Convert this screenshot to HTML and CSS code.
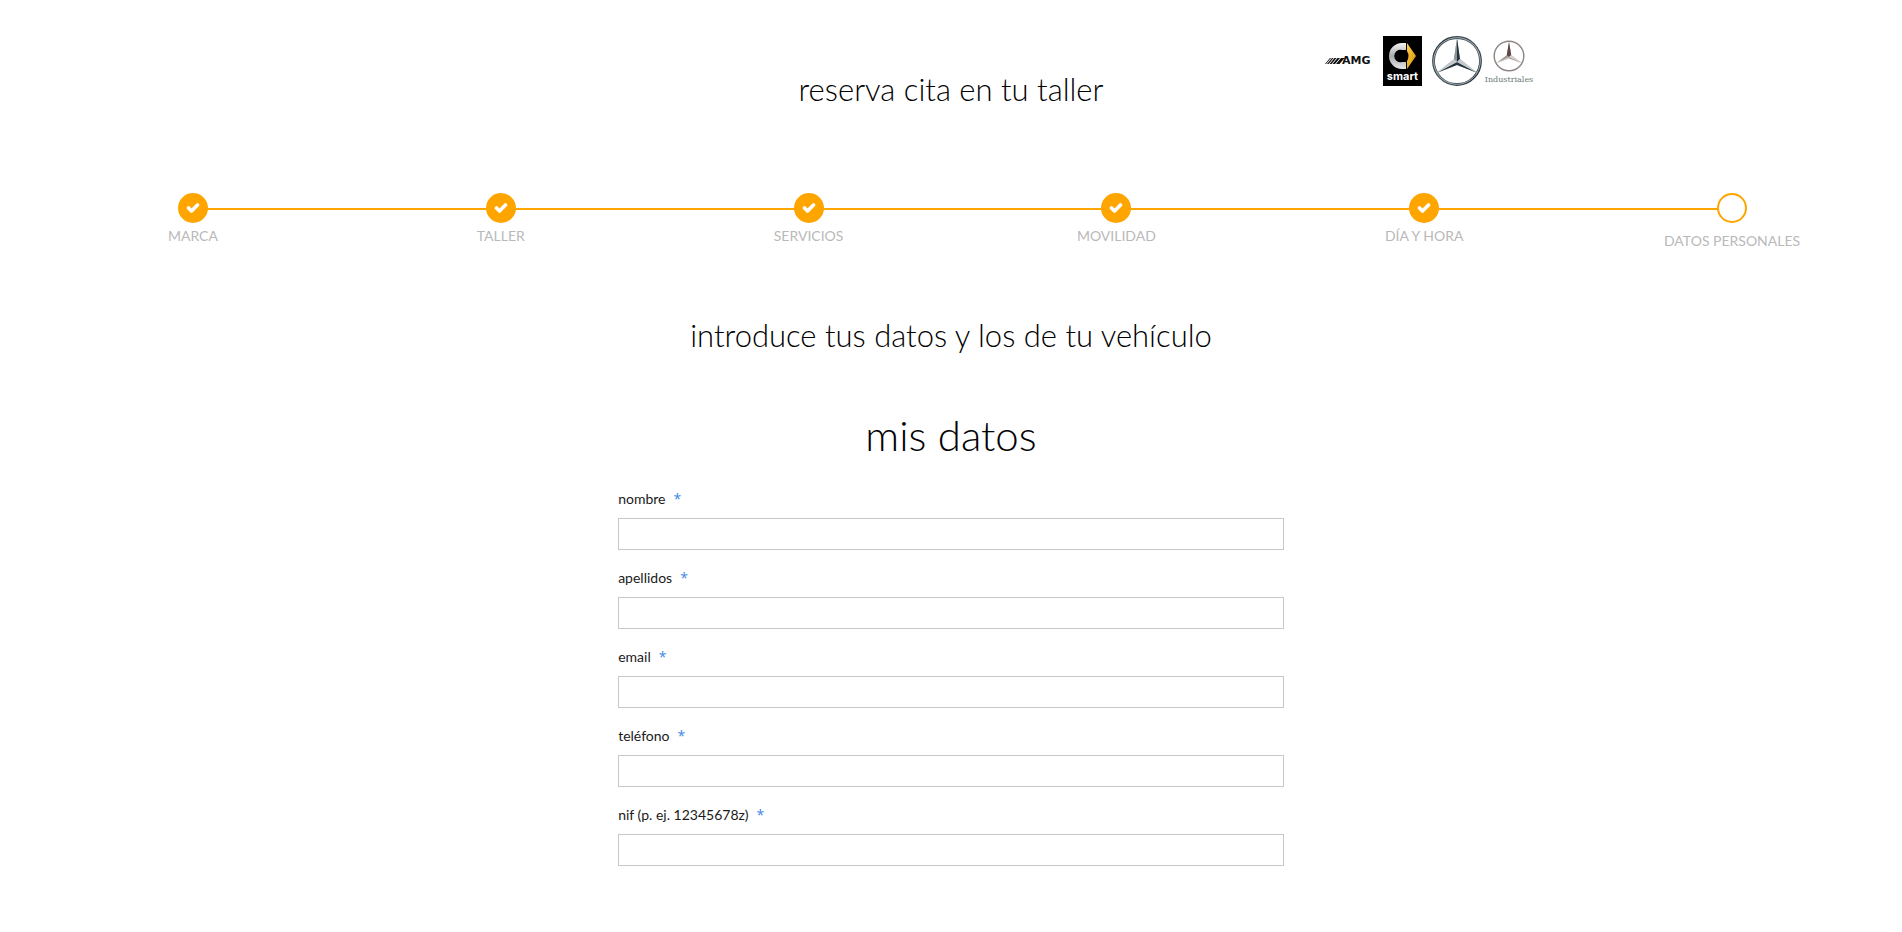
FILE: index.html
```html
<!DOCTYPE html>
<html lang="es">
<head>
<meta charset="utf-8">
<meta name="viewport" content="width=device-width, initial-scale=1">
<title>Reserva cita en tu taller</title>
<link rel="stylesheet" href="styles.css">
</head>
<body>
<svg class="defs" width="0" height="0" aria-hidden="true">
  <defs>
    <linearGradient id="chrome" x1="0" y1="0" x2="1" y2="1">
      <stop offset="0" stop-color="#1f2c33"/><stop offset=".5" stop-color="#46545b"/><stop offset="1" stop-color="#17242b"/>
    </linearGradient>
    <linearGradient id="silver" x1="0" y1="0" x2="0" y2="1">
      <stop offset="0" stop-color="#f4f4f4"/><stop offset=".5" stop-color="#a9abad"/><stop offset="1" stop-color="#e6e6e6"/>
    </linearGradient>
    <linearGradient id="gold" x1="0" y1="0" x2="1" y2="1">
      <stop offset="0" stop-color="#ffd24a"/><stop offset="1" stop-color="#d68f00"/>
    </linearGradient>
    <symbol id="check" viewBox="0 0 14 11">
      <path d="M2.5 5 L5.5 8 L11.5 2" fill="none" stroke="#fff" stroke-width="3.6" stroke-linejoin="round" stroke-linecap="round"/>
    </symbol>
  </defs>
</svg>

<header class="header">
  <h1 class="title header-title">reserva cita en tu taller</h1>
  <div class="logos">
    <svg class="logo" viewBox="0 0 50 50" role="img" aria-label="AMG">
      <g fill="#111"><path d="M0 28L5 22H6L1 28zM2 28L7 22H8.500L3.500 28zM4.500 28L9.500 22H11.500L6.500 28zM7.500 28L12.500 22H15L10 28zM11 28L16 22H19.500L14.500 28z"/></g>
      <text class="logo-amg" x="17" y="28">AMG</text>
    </svg>
    <svg class="logo" viewBox="0 0 50 50" role="img" aria-label="smart">
      <rect x="5" width="39" height="50" fill="#000"/>
      <path d="M28 7H24A13 13 0 1 0 24 33H28V26H24A6.200 6.200 0 1 1 24 14H28z" fill="url(#silver)"/>
      <path d="M29 7V15Q32 20 29 25V33L38 20z" fill="url(#gold)"/>
      <text class="logo-smart" x="24.500" y="44" text-anchor="middle">smart</text>
    </svg>
    <svg class="logo" viewBox="0 0 50 50" role="img" aria-label="Mercedes-Benz">
      <circle cx="26" cy="25" r="23.500" fill="none" stroke="url(#chrome)" stroke-width="2.800"/>
      <circle cx="26" cy="25" r="23.300" fill="none" stroke="#c9d2d5" stroke-width=".8"/>
      <path d="M26 2L29 23L46.500 37L26 29L5.500 37L23 23z" fill="#a5afb3"/>
      <path d="M26 2L29 23L26 26zM46.500 37L26 29V26zM5.500 37L26 29V26z" fill="#26343b"/>
      <path d="M26 2L23 23L26 26z" fill="#87949a"/>
      <path d="M29 23L46.500 37L26 26zM23 23L5.500 37L26 26z" fill="#c3cace"/>
    </svg>
    <svg class="logo" viewBox="0 0 50 50" role="img" aria-label="Mercedes-Benz Industriales">
      <circle cx="25" cy="20" r="14.800" fill="none" stroke="#8d8583" stroke-width="1.400"/>
      <path d="M25 6L27.200 19L37.500 27L25 22.500L12.500 27L22.800 19z" fill="#a39a97"/>
      <path d="M25 6L27.200 19L25 21L22.800 19z" fill="#5b4845"/>
      <path d="M27.200 19L37.500 27L25 21zM25 22.500L12.500 27L25 21z" fill="#d9d3d0"/>
      <text class="logo-industrial" x="25" y="46" text-anchor="middle">Industriales</text>
    </svg>
  </div>
</header>

<main>
  <ol class="steps">
    <li class="step"><span class="dot"><svg class="check"><use href="#check"/></svg></span><span class="step-label">MARCA</span></li>
    <li class="step"><span class="dot"><svg class="check"><use href="#check"/></svg></span><span class="step-label">TALLER</span></li>
    <li class="step"><span class="dot"><svg class="check"><use href="#check"/></svg></span><span class="step-label">SERVICIOS</span></li>
    <li class="step"><span class="dot"><svg class="check"><use href="#check"/></svg></span><span class="step-label">MOVILIDAD</span></li>
    <li class="step"><span class="dot"><svg class="check"><use href="#check"/></svg></span><span class="step-label">DÍA Y HORA</span></li>
    <li class="step step-current" aria-current="step"><span class="dot"></span><span class="step-label">DATOS PERSONALES</span></li>
  </ol>

  <h2 class="title">introduce tus datos y los de tu vehículo</h2>

  <form class="form">
    <h3 class="form-title">mis datos</h3>
    <div class="field"><label for="nombre">nombre<span class="required">*</span></label><input id="nombre" type="text" required></div>
    <div class="field"><label for="apellidos">apellidos<span class="required">*</span></label><input id="apellidos" type="text" required></div>
    <div class="field"><label for="email">email<span class="required">*</span></label><input id="email" type="email" required></div>
    <div class="field"><label for="telefono">teléfono<span class="required">*</span></label><input id="telefono" type="tel" required></div>
    <div class="field"><label for="nif">nif (p. ej. 12345678z)<span class="required">*</span></label><input id="nif" type="text" required></div>
  </form>
</main>
</body>
</html>
```
FILE: styles.css
```css
* { box-sizing: border-box; }

body {
  margin: 0;
  background: #fff;
  color: #000;
  font-family: Lato, "Open Sans", sans-serif;
}

.defs { position: absolute; }

.header {
  display: grid;
  grid-template-columns: 1fr 35% 1fr;
  align-items: start;
  padding-top: 36px;
}

.title {
  margin: 0;
  font-size: 31px;
  line-height: 40px;
  font-weight: 300;
  text-align: center;
}

.header-title {
  grid-column: 2;
  padding-top: 33px;
}

.logos {
  display: flex;
  gap: 3px;
  padding-left: 41px;
}

.logo {
  width: 50px;
  height: 50px;
  flex: none;
  overflow: visible;
}

.logo-amg {
  font: bold 9px "DejaVu Sans", sans-serif;
  font-size: 11px;
  fill: #111;
}

.logo-smart {
  font: bold 11px Inter, sans-serif;
  font-size: 11px;
  fill: #fff;
}

.logo-industrial {
  font: 8px "DejaVu Serif", serif;
  fill: #6b7a76;
}

.steps {
  display: grid;
  grid-template-columns: repeat(6, 1fr);
  margin: 0;
  padding: 84px 16px 0 39px;
  list-style: none;
}

.step {
  position: relative;
  display: flex;
  flex-direction: column;
  align-items: center;
  gap: 4px;
}

.step:not(:last-child)::after {
  content: "";
  position: absolute;
  z-index: -1;
  top: 15px;
  left: 50%;
  width: 100%;
  height: 2px;
  background: #ffa500;
}

.dot {
  display: flex;
  align-items: center;
  justify-content: center;
  width: 30px;
  height: 30px;
  border: 2px solid #ffa500;
  border-radius: 50%;
  background: #ffa500;
}

.check {
  width: 14px;
  height: 11px;
}

.step-label {
  color: #b9b9b9;
  font-size: 14px;
  line-height: 18px;
}

.step-current { gap: 9px; }
.step-current .dot { background: #fff; }

main > .title { margin-top: 65px; }

.form {
  width: 35%;
  margin: 0 auto;
  padding: 52px 0 32px;
}

.form-title {
  margin: 0 0 27px;
  font-size: 42px;
  line-height: 56px;
  font-weight: 300;
  text-align: center;
}

.field {
  display: flex;
  flex-direction: column;
  gap: 10px;
  margin-bottom: 19px;
}

.field label {
  color: #1a1a1a;
  font-size: 14px;
  line-height: 18px;
}

.required {
  margin-left: 8px;
  color: #3b8ae6;
  font-family: "Open Sans", sans-serif;
}

.field input {
  width: 100%;
  height: 32px;
  padding: 0 10px;
  border: 1px solid #c8c8c8;
  border-radius: 0;
  background: #fff;
  font: inherit;
  font-size: 14px;
}
```
